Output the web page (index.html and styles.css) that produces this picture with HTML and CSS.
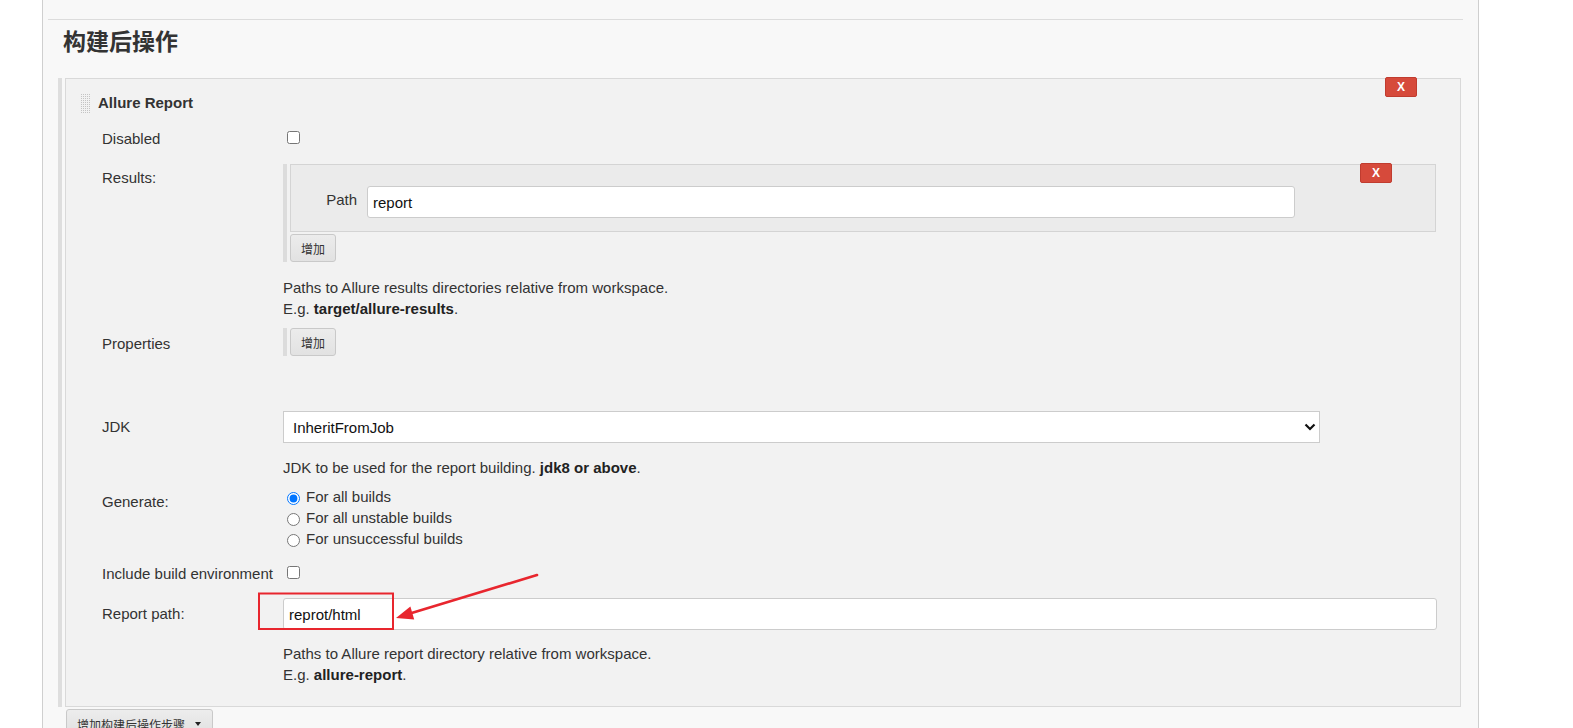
FILE: index.html
```html
<!DOCTYPE html>
<html lang="zh">
<head>
<meta charset="utf-8">
<title>构建后操作</title>
<link rel="stylesheet" href="styles.css">
</head>
<body>
<div class="page">
  <div class="section">
    <h2 class="section-title">构建后操作</h2>
    <div class="chunk">
      <div class="chunk-box">
        <button class="del del-top">X</button>
        <div class="chunk-head"><span class="handle"></span><span class="chunk-title">Allure Report</span></div>

        <div class="row row-disabled">
          <div class="lbl">Disabled</div>
          <div class="ctl ctl-check"><input type="checkbox" class="cb"></div>
        </div>

        <div class="row row-results">
          <div class="lbl lbl-p2">Results:</div>
          <div class="ctl">
            <div class="repeat">
              <div class="repeat-box">
                <button class="del del-inner">X</button>
                <div class="rlbl">Path</div>
                <input type="text" class="txt txt-path" value="report">
              </div>
              <button class="add-btn add-gap">增加</button>
            </div>
            <div class="help help-results">Paths to Allure results directories relative from workspace.<br>E.g. <b>target/allure-results</b>.</div>
          </div>
        </div>

        <div class="row row-props">
          <div class="lbl lbl-p4">Properties</div>
          <div class="ctl">
            <div class="repeat"><button class="add-btn">增加</button></div>
          </div>
        </div>

        <div class="row row-jdk">
          <div class="lbl lbl-p4">JDK</div>
          <div class="ctl">
            <div class="sel">
              <select class="select"><option>InheritFromJob</option></select>
              <svg class="chev" width="12" height="8" viewBox="0 0 12 8"><path d="M1.5 1.5 L6 6 L10.5 1.5" fill="none" stroke="#111" stroke-width="2.2"/></svg>
            </div>
            <div class="help help-jdk">JDK to be used for the report building. <b>jdk8 or above</b>.</div>
          </div>
        </div>

        <div class="row row-gen">
          <div class="lbl lbl-p4">Generate:</div>
          <div class="ctl">
            <label class="radio"><input type="radio" name="gen" checked>For all builds</label>
            <label class="radio"><input type="radio" name="gen">For all unstable builds</label>
            <label class="radio"><input type="radio" name="gen">For unsuccessful builds</label>
          </div>
        </div>

        <div class="row row-env">
          <div class="lbl">Include build environment</div>
          <div class="ctl ctl-check"><input type="checkbox" class="cb"></div>
        </div>

        <div class="row row-report">
          <div class="lbl lbl-p4">Report path:</div>
          <div class="ctl">
            <input type="text" class="txt txt-report" value="reprot/html">
            <div class="help help-report">Paths to Allure report directory relative from workspace.<br>E.g. <b>allure-report</b>.</div>
          </div>
        </div>
      </div>
    </div>
    <div class="add-step"><button class="step-btn">增加构建后操作步骤<span class="caret"></span></button></div>
  </div>
</div>
<svg class="annot" width="1573" height="728" viewBox="0 0 1573 728">
  <rect x="259" y="593.5" width="134" height="35.5" fill="none" stroke="#e8262e" stroke-width="2"/>
  <line x1="537" y1="575" x2="410" y2="613.5" stroke="#e8262e" stroke-width="2.6" stroke-linecap="round"/>
  <polygon points="396,618 414.2,619.4 410.4,606.6" fill="#e8262e"/>
</svg>
</body>
</html>
```

FILE: styles.css
```css
* { box-sizing: border-box; }
html, body { margin: 0; padding: 0; }
body {
  background: #fff;
  font-family: "Liberation Sans", Arial, "Noto Sans CJK SC", sans-serif;
  font-size: 15px;
  color: #333;
  height: 728px;
  overflow: hidden;
  position: relative;
}
.page {
  margin-left: 42px;
  width: 1437px;
  height: 728px;
  background: #f8f8f8;
  border-left: 1px solid #cfcfcf;
  border-right: 1px solid #cfcfcf;
  overflow: hidden;
}
.section {
  margin: 19px 15px 0 5px;
  border-top: 1px solid #dcdcdc;
}
.section-title {
  margin: 5px 0 0 15px;
  font-family: "Noto Sans CJK SC", sans-serif;
  font-size: 23px;
  line-height: 30px;
  font-weight: bold;
  color: #333;
}
.chunk {
  margin: 23px 2px 0 10px;
  display: flex;
  border-left: 4px solid #dedede;
  padding-left: 3px;
}
.chunk-box {
  flex: 1;
  position: relative;
  background: #f2f2f2;
  border: 1px solid #d9d9d9;
  padding: 13px 0 21px 0;
}
.del {
  position: absolute;
  width: 32px;
  height: 20px;
  padding: 0;
  background: #d64a3b;
  border: 1px solid #c03c2f;
  border-radius: 2px;
  color: #fff;
  font-family: "Liberation Sans", Arial, sans-serif;
  font-weight: bold;
  font-size: 12px;
  line-height: 18px;
  text-align: center;
}
.del-top { top: -2px; right: 43px; }
.del-inner { top: -2px; right: 43px; }
.chunk-head {
  display: flex;
  align-items: flex-start;
  height: 21px;
  padding-left: 14px;
}
.handle {
  width: 11px;
  height: 20px;
  margin-top: 1px;
  background-color: #c4c4c4;
  background-image:
    linear-gradient(to right, #f2f2f2 1px, transparent 1px),
    linear-gradient(to bottom, #f2f2f2 1px, transparent 1px);
  background-size: 2px 2px;
}
.chunk-title {
  margin-left: 7px;
  margin-top: 1px;
  line-height: 20px;
  font-weight: bold;
  color: #333;
}
.row {
  display: grid;
  grid-template-columns: 217px 1fr;
}
.lbl {
  padding-left: 36px;
  padding-top: 2px;
  line-height: 20px;
}
.lbl-p2 { padding-top: 4px; }
.lbl-p4 { padding-top: 6px; }
.ctl { padding-right: 23px; }
.ctl-check {
  display: flex;
  align-items: center;
  align-self: start;
  height: 20px;
}
.cb {
  width: 13px;
  height: 13px;
  margin: 0 0 0 4px;
}
.row-disabled { margin-top: 14px; }
.row-results { margin-top: 15px; }
.row-props { margin-top: 9px; }
.row-jdk { margin-top: 55px; }
.row-gen { margin-top: 8px; }
.row-env { margin-top: 13px; }
.row-report { margin-top: 14px; }

.repeat {
  border-left: 4px solid #dcdcdc;
  padding-left: 3px;
  margin-right: 1px;
}
.repeat-box {
  position: relative;
  display: flex;
  align-items: flex-start;
  background: #ebebeb;
  border: 1px solid #d4d4d4;
  padding: 21px 0 13px;
}
.rlbl {
  width: 66px;
  margin-right: 10px;
  text-align: right;
  padding-top: 4px;
  line-height: 20px;
}
.txt {
  height: 32px;
  border: 1px solid #ccc;
  border-radius: 3px;
  background: #fff;
  padding: 0 5px;
  font-family: "Liberation Sans", Arial, sans-serif;
  font-size: 15px;
  color: #111;
  outline: none;
}
.txt-path { width: 928px; }
.txt-report { display: block; width: 100%; }
.add-btn {
  display: block;
  width: 46px;
  height: 28px;
  padding: 0;
  background: linear-gradient(#ececec, #e2e2e2);
  border: 1px solid #c9c9c9;
  border-radius: 3px;
  font-family: "Noto Sans CJK SC", sans-serif;
  font-size: 12px;
  color: #333;
}
.add-gap { margin-top: 2px; }
.help {
  line-height: 21px;
  color: #333;
}
.help b { color: #222; }
.help-results { margin-top: 15px; }
.help-jdk { margin-top: 14px; }
.help-report { margin-top: 13px; }
.sel {
  position: relative;
  width: 1037px;
}
.select {
  -webkit-appearance: none;
  appearance: none;
  display: block;
  width: 100%;
  height: 32px;
  border: 1px solid #ccc;
  border-radius: 0;
  background: #fff;
  padding: 0 9px;
  font-family: "Liberation Sans", Arial, sans-serif;
  font-size: 15px;
  color: #111;
  outline: none;
}
.chev {
  position: absolute;
  right: 4px;
  top: 12px;
}
.radio {
  display: flex;
  align-items: center;
  height: 21px;
  line-height: 21px;
}
.radio input {
  width: 13px;
  height: 13px;
  margin: 3px 6px 0 4px;
}
.add-step { margin: 2px 0 0 18px; }
.step-btn {
  display: flex;
  align-items: center;
  height: 28px;
  padding: 2px 11px 0 10px;
  background: linear-gradient(#ededed, #e0e0e0);
  border: 1px solid #c9c9c9;
  border-radius: 3px;
  font-family: "Noto Sans CJK SC", sans-serif;
  font-size: 12px;
  color: #333;
}
.caret {
  display: inline-block;
  width: 0;
  height: 0;
  margin-left: 10px;
  border-left: 3px solid transparent;
  border-right: 3px solid transparent;
  border-top: 4px solid #222;
}
.annot {
  position: absolute;
  left: 0;
  top: 0;
  pointer-events: none;
}
```
